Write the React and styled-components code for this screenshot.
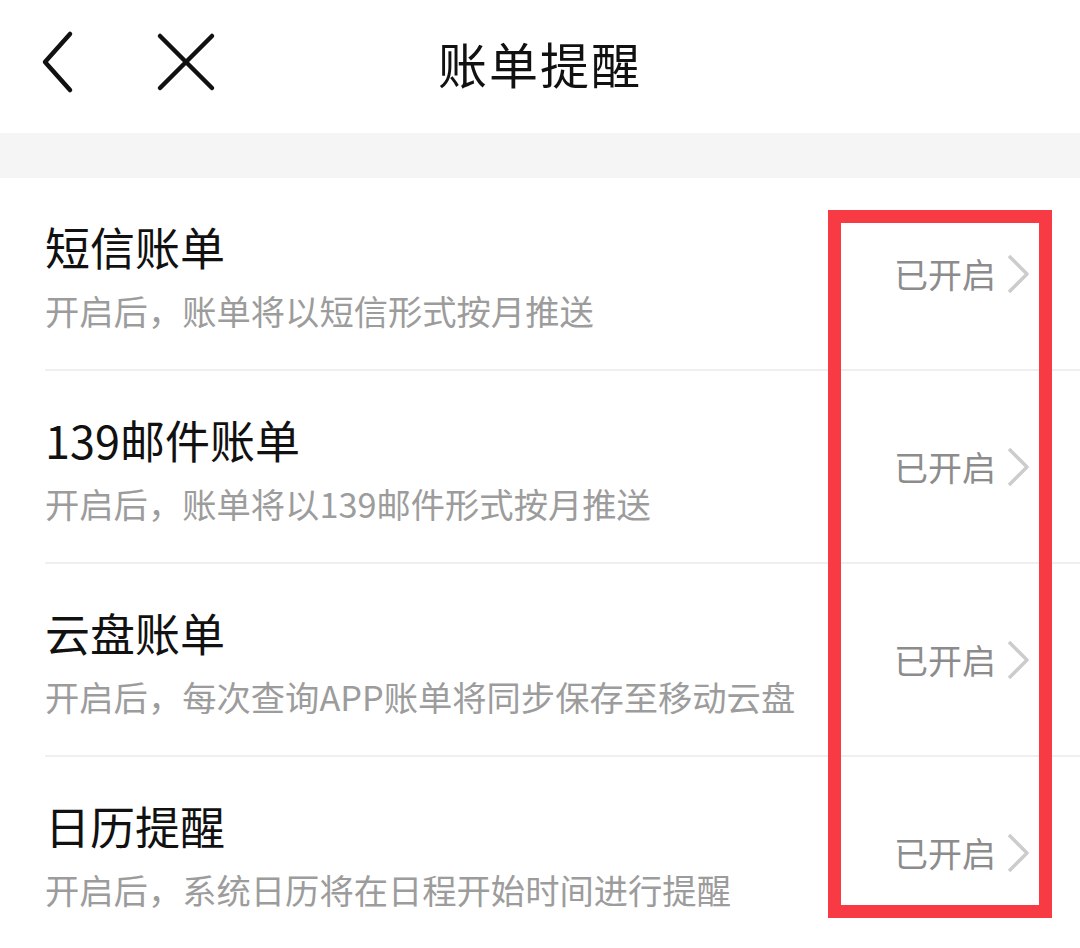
import React from "react";
import styled, { createGlobalStyle } from "styled-components";

const GlobalStyle = createGlobalStyle`
  html, body {
    margin: 0;
    padding: 0;
    background: #ffffff;
  }
  body {
    font-family: "Noto Sans CJK SC", "Noto Sans", sans-serif;
    color: #111111;
  }
`;

const bills = [
  { title: "短信账单", desc: "开启后，账单将以短信形式按月推送" },
  { title: "139邮件账单", desc: "开启后，账单将以139邮件形式按月推送" },
  { title: "云盘账单", desc: "开启后，每次查询APP账单将同步保存至移动云盘" },
  { title: "日历提醒", desc: "开启后，系统日历将在日程开始时间进行提醒" },
];

const App = () => {
  return (
    <Page>
      <GlobalStyle />
      <Header>
        <NavButtons>
          <IconButton>
            <svg width="40" height="64" viewBox="0 0 40 64">
              <path
                d="M34 4 L9 32 L34 60"
                fill="none"
                stroke="#111"
                strokeWidth="4.5"
                strokeLinecap="round"
                strokeLinejoin="round"
              />
            </svg>
          </IconButton>
          <IconButton>
            <svg width="60" height="60" viewBox="0 0 60 60">
              <path
                d="M4 4 L56 56 M56 4 L4 56"
                fill="none"
                stroke="#111"
                strokeWidth="4.5"
                strokeLinecap="round"
              />
            </svg>
          </IconButton>
        </NavButtons>
        <Title>账单提醒</Title>
      </Header>
      <Spacer />
      <List>
        {bills.map((item) => (
          <Row key={item.title}>
            <RowText>
              <RowTitle>{item.title}</RowTitle>
              <RowDesc>{item.desc}</RowDesc>
            </RowText>
            <Status>
              已开启
              <svg width="24" height="40" viewBox="0 0 24 40">
                <path
                  d="M3 2 L21 20 L3 38"
                  fill="none"
                  stroke="#cccccc"
                  strokeWidth="3.5"
                  strokeLinejoin="round"
                />
              </svg>
            </Status>
          </Row>
        ))}
        <Highlight />
      </List>
    </Page>
  );
};

const Page = styled.div`
  width: 1080px;
  height: 948px;
  overflow: hidden;
  background: #ffffff;
`;

const Header = styled.header`
  position: relative;
  height: 133px;
  display: flex;
  align-items: center;
  justify-content: center;
`;

const NavButtons = styled.div`
  position: absolute;
  left: 36px;
  top: 30px;
  display: flex;
  align-items: center;
  gap: 80px;
`;

const IconButton = styled.span`
  display: flex;
  align-items: center;
  justify-content: center;
`;

const Title = styled.h1`
  margin: 0;
  font-size: 49px;
  font-weight: 400;
  line-height: 60px;
  letter-spacing: 2px;
  color: #111111;
  padding-bottom: 8px;
`;

const Spacer = styled.div`
  height: 45px;
  background: #f5f5f5;
`;

const List = styled.div`
  position: relative;
`;

const Row = styled.div`
  height: 193px;
  margin-left: 45px;
  padding-right: 50px;
  box-sizing: border-box;
  display: flex;
  align-items: center;
  justify-content: space-between;
  border-bottom: 2px solid #efefef;
`;

const RowText = styled.div`
  display: flex;
  flex-direction: column;
  gap: 12px;
  padding-top: 2px;
`;

const RowTitle = styled.div`
  font-size: 45px;
  line-height: 58px;
  color: #111111;
`;

const RowDesc = styled.div`
  font-size: 34.3px;
  line-height: 44px;
  color: #9c9c9c;
`;

const Status = styled.div`
  display: flex;
  align-items: center;
  gap: 10px;
  font-size: 34px;
  line-height: 44px;
  color: #8c8c8c;
`;

const Highlight = styled.div`
  position: absolute;
  left: 828px;
  top: 32px;
  width: 224px;
  height: 708px;
  box-sizing: border-box;
  border: 13px solid #f83a45;
  pointer-events: none;
`;

export default App;
